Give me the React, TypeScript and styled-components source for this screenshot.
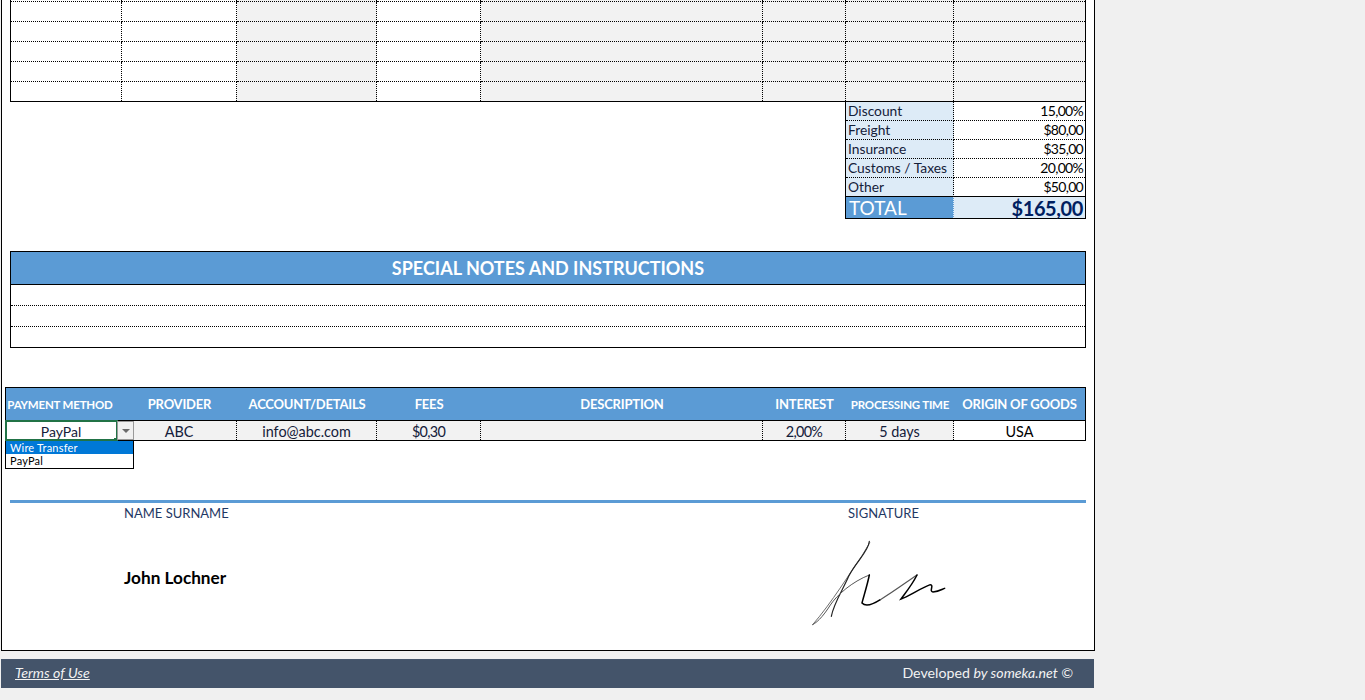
import React from "react";
import styled, { createGlobalStyle } from "styled-components";

const COLUMNS = "111px 115px 140px 104px 282px 83px 108px 131px";
const PAYMENT_COLUMNS = "116px 115px 140px 104px 282px 83px 108px 131px";
const SHADED = [false, false, true, false, true, true, true, true];

const GlobalStyle = createGlobalStyle`
  html, body {
    margin: 0;
    background: #f0f0f0;
    overflow: hidden;
    font-family: "Lato", "Liberation Sans", sans-serif;
  }
`;

const Sheet = styled.div`
  box-sizing: border-box;
  width: 1094px;
  height: 651px;
  margin-left: 1px;
  padding-left: 8px;
  background: #fff;
  border: 1px solid #000;
  border-top: none;
`;

const Table = styled.div`
  box-sizing: border-box;
  width: 1076px;
  border: 1px solid #000;
  border-top: none;
`;

const Row = styled.div<{ $height: number }>`
  display: grid;
  grid-template-columns: ${COLUMNS};
  height: ${(p) => p.$height}px;
`;

const Cell = styled.div<{ $shaded?: boolean; $last?: boolean; $noBottom?: boolean }>`
  box-sizing: border-box;
  background: ${(p) => (p.$shaded ? "#f2f2f2" : "#fff")};
  border-right: ${(p) => (p.$last ? "none" : "1px dotted #000")};
  border-bottom: ${(p) => (p.$noBottom ? "none" : "1px dotted #000")};
`;

const Totals = styled.div`
  box-sizing: border-box;
  width: 241px;
  margin-left: 835px;
  border: 1px solid #000;
  border-top: none;
`;

const TotalRow = styled.div`
  display: grid;
  grid-template-columns: 108px 131px;
  grid-template-rows: 19px;
`;

const TotalLabel = styled.div<{ $last?: boolean }>`
  box-sizing: border-box;
  padding-left: 2px;
  background: #ddebf7;
  color: #14203a;
  font-size: 13.8px;
  line-height: 18px;
  border-right: 1px dotted #000;
  border-bottom: ${(p) => (p.$last ? "1px solid #000" : "1px dotted #000")};
`;

const TotalValue = styled.div<{ $last?: boolean }>`
  box-sizing: border-box;
  padding-right: 2px;
  text-align: right;
  color: #000;
  font-size: 14px;
  letter-spacing: -0.7px;
  line-height: 18px;
  border-bottom: ${(p) => (p.$last ? "1px solid #000" : "1px dotted #000")};
`;

const GrandRow = styled.div`
  display: grid;
  grid-template-columns: 108px 131px;
  grid-template-rows: 21px;
`;

const GrandLabel = styled.div`
  box-sizing: border-box;
  padding-left: 3px;
  background: #5b9bd5;
  color: #fff;
  font-size: 19px;
  font-weight: 400;
  line-height: 22px;
  border-right: 1px dotted #ddebf7;
`;

const GrandValue = styled.div`
  padding-right: 2px;
  background: #ddebf7;
  color: #002060;
  text-align: right;
  font-size: 20px;
  font-weight: 700;
  letter-spacing: -0.4px;
  line-height: 22px;
`;

const Notes = styled.div`
  box-sizing: border-box;
  width: 1076px;
  margin-top: 32px;
  border: 1px solid #000;
`;

const NotesTitle = styled.div`
  height: 32px;
  background: #5b9bd5;
  color: #fff;
  text-align: center;
  font-size: 18px;
  font-weight: 700;
  line-height: 33px;
  border-bottom: 1px solid #000;
`;

const NoteLine = styled.div<{ $last?: boolean }>`
  box-sizing: border-box;
  height: ${(p) => (p.$last ? 20 : 21)}px;
  border-bottom: ${(p) => (p.$last ? "none" : "1px dotted #000")};
`;

const Payment = styled.div`
  box-sizing: border-box;
  width: 1081px;
  margin: 39px 0 0 -5px;
  border: 1px solid #000;
`;

const PaymentHead = styled.div`
  display: grid;
  grid-template-columns: ${PAYMENT_COLUMNS};
  height: 32px;
  background: #5b9bd5;
  border-bottom: 1px solid #000;
`;

const HeadCell = styled.div<{ $small?: boolean; $inset?: number }>`
  padding-right: ${(p) => p.$inset ?? 0}px;
  color: #fff;
  text-align: center;
  white-space: nowrap;
  font-weight: 700;
  font-size: ${(p) => (p.$small ? 11.5 : 13)}px;
  letter-spacing: -0.2px;
  line-height: 33px;
`;

const PaymentRow = styled.div`
  display: grid;
  grid-template-columns: ${PAYMENT_COLUMNS};
  grid-template-rows: 19px;
`;

const PaymentCell = styled.div<{ $shaded?: boolean; $last?: boolean; $numeric?: boolean }>`
  box-sizing: border-box;
  background: ${(p) => (p.$shaded ? "#f2f2f2" : "#fff")};
  border-right: ${(p) => (p.$last ? "none" : "1px dotted #000")};
  color: ${(p) => (p.$last ? "#000" : "#14203a")};
  text-align: center;
  font-size: 14.4px;
  letter-spacing: ${(p) => (p.$numeric ? "-0.7px" : "0")};
  line-height: 21px;
`;

const SelectedCell = styled.div`
  position: relative;
  padding-right: 6px;
  background: #fff;
  color: #14203a;
  text-align: center;
  font-size: 14px;
  line-height: 21px;
  &::after {
    content: "";
    position: absolute;
    left: -1px;
    top: -1px;
    width: 109px;
    height: 17px;
    border: 2px solid #217346;
  }
`;

const FillHandle = styled.div`
  position: absolute;
  z-index: 1;
  left: 108px;
  top: 17px;
  width: 4px;
  height: 4px;
  background: #217346;
`;

const DropButton = styled.div`
  position: absolute;
  z-index: 1;
  left: 111px;
  top: 0;
  box-sizing: border-box;
  width: 17px;
  height: 19px;
  background: #f0f0f0;
  border: 1px solid #9a9a9a;
  display: flex;
  align-items: center;
  justify-content: center;
  &::after {
    content: "";
    border-left: 4px solid transparent;
    border-right: 4px solid transparent;
    border-top: 4px solid #6a6a6a;
  }
`;

const DropList = styled.div`
  position: absolute;
  z-index: 2;
  left: -1px;
  top: 20px;
  box-sizing: border-box;
  width: 129px;
  height: 28px;
  background: #fff;
  border: 1px solid #000;
  border-top: none;
  text-align: left;
`;

const DropItem = styled.div<{ $active?: boolean }>`
  height: 13px;
  padding-left: 4px;
  background: ${(p) => (p.$active ? "#0078d7" : "#fff")};
  color: ${(p) => (p.$active ? "#fff" : "#000")};
  font-size: 11px;
  letter-spacing: 0.2px;
  line-height: 14px;
`;

const Rule = styled.div`
  width: 1076px;
  height: 3px;
  margin-top: 59px;
  background: #5b9bd5;
`;

const SignRow = styled.div`
  display: flex;
  width: 1076px;
`;

const NameBlock = styled.div`
  width: 802px;
  padding-left: 114px;
  box-sizing: border-box;
`;

const SignLabel = styled.div`
  margin-top: 1px;
  color: #1f3864;
  font-size: 13px;
  line-height: 18px;
`;

const SignName = styled.div`
  margin-top: 44px;
  color: #000;
  font-size: 17.2px;
  font-weight: 700;
  line-height: 24px;
`;

const SignatureBlock = styled.div`
  display: flex;
  flex-direction: column;
`;

const SignatureLabel = styled(SignLabel)`
  padding-left: 36px;
`;

const SignatureArt = styled.svg`
  display: block;
  width: 140px;
  height: 90px;
  margin-top: 17px;
`;

const Footer = styled.div`
  box-sizing: border-box;
  width: 1093px;
  height: 29px;
  margin: 8px 0 0 1px;
  padding: 0 21px 0 14px;
  background: #44546a;
  color: #f2f2f2;
  font-size: 14.2px;
  line-height: 28px;
  display: flex;
  justify-content: space-between;
`;

const TermsLink = styled.span`
  font-style: italic;
  text-decoration: underline;
`;

const Credit = styled.span`
  em {
    font-style: italic;
  }
`;

const charges = [
  ["Discount", "15,00%"],
  ["Freight", "$80,00"],
  ["Insurance", "$35,00"],
  ["Customs / Taxes", "20,00%"],
  ["Other", "$50,00"],
];

const itemRows = [2, 20, 20, 20, 20, 19];

const paymentHeads: [string, boolean][] = [
  ["PAYMENT METHOD", true],
  ["PROVIDER", false],
  ["ACCOUNT/DETAILS", false],
  ["FEES", false],
  ["DESCRIPTION", false],
  ["INTEREST", false],
  ["PROCESSING TIME", true],
  ["ORIGIN OF GOODS", false],
];

const paymentValues = ["ABC", "info@abc.com", "$0,30", "", "2,00%", "5 days", "USA"];

const Signature = () => (
  <SignatureArt viewBox="0 0 420 270" fill="none" strokeLinecap="round">
    <path d="M2 257C60 190 115 100 150 50C165 25 178 3 172 12" stroke="#6e6e6e" strokeWidth="3" />
    <path d="M172 7C170 38 130 70 110 112C95 148 65 192 58 232" stroke="#222" strokeWidth="3.5" />
    <path d="M2 257C20 248 40 222 55 198C75 168 120 128 172 108" stroke="#555" strokeWidth="3" />
    <path d="M172 108C166 138 155 172 150 192C160 203 180 198 205 182" stroke="#000" strokeWidth="4.5" />
    <path d="M205 182C245 158 285 128 315 108" stroke="#555" strokeWidth="3.5" />
    <path d="M315 108C300 138 280 162 267 180C290 172 325 148 355 137C367 138 350 158 363 159C380 158 390 151 398 148" stroke="#000" strokeWidth="4.5" />
  </SignatureArt>
);

const App = (): JSX.Element => {
  return (
    <>
      <GlobalStyle />
      <Sheet>
        <Table>
          {itemRows.map((height, r) => (
            <Row key={r} $height={height}>
              {SHADED.map((shaded, c) => (
                <Cell
                  key={c}
                  $shaded={shaded}
                  $last={c === SHADED.length - 1}
                  $noBottom={r === itemRows.length - 1}
                />
              ))}
            </Row>
          ))}
        </Table>

        <Totals>
          {charges.map(([label, value], i) => (
            <TotalRow key={label}>
              <TotalLabel $last={i === charges.length - 1}>{label}</TotalLabel>
              <TotalValue $last={i === charges.length - 1}>{value}</TotalValue>
            </TotalRow>
          ))}
          <GrandRow>
            <GrandLabel>TOTAL</GrandLabel>
            <GrandValue>$165,00</GrandValue>
          </GrandRow>
        </Totals>

        <Notes>
          <NotesTitle>SPECIAL NOTES AND INSTRUCTIONS</NotesTitle>
          <NoteLine />
          <NoteLine />
          <NoteLine $last />
        </Notes>

        <Payment>
          <PaymentHead>
            {paymentHeads.map(([label, small], i) => (
              <HeadCell key={label} $small={small} $inset={i === 0 ? 8 : 0}>
                {label}
              </HeadCell>
            ))}
          </PaymentHead>
          <PaymentRow>
            <SelectedCell>
              PayPal
              <FillHandle />
              <DropButton />
              <DropList>
                <DropItem $active>Wire Transfer</DropItem>
                <DropItem>PayPal</DropItem>
              </DropList>
            </SelectedCell>
            {paymentValues.map((value, i) => (
              <PaymentCell
                key={i}
                $shaded={i < paymentValues.length - 1}
                $last={i === paymentValues.length - 1}
                $numeric={/^[$\d]/.test(value) && !value.includes("days")}
              >
                {value}
              </PaymentCell>
            ))}
          </PaymentRow>
        </Payment>

        <Rule />
        <SignRow>
          <NameBlock>
            <SignLabel>NAME SURNAME</SignLabel>
            <SignName>John Lochner</SignName>
          </NameBlock>
          <SignatureBlock>
            <SignatureLabel>SIGNATURE</SignatureLabel>
            <Signature />
          </SignatureBlock>
        </SignRow>
      </Sheet>
      <Footer>
        <TermsLink>Terms of Use</TermsLink>
        <Credit>
          Developed <em>by someka.net ©</em>
        </Credit>
      </Footer>
    </>
  );
};

export default App;
